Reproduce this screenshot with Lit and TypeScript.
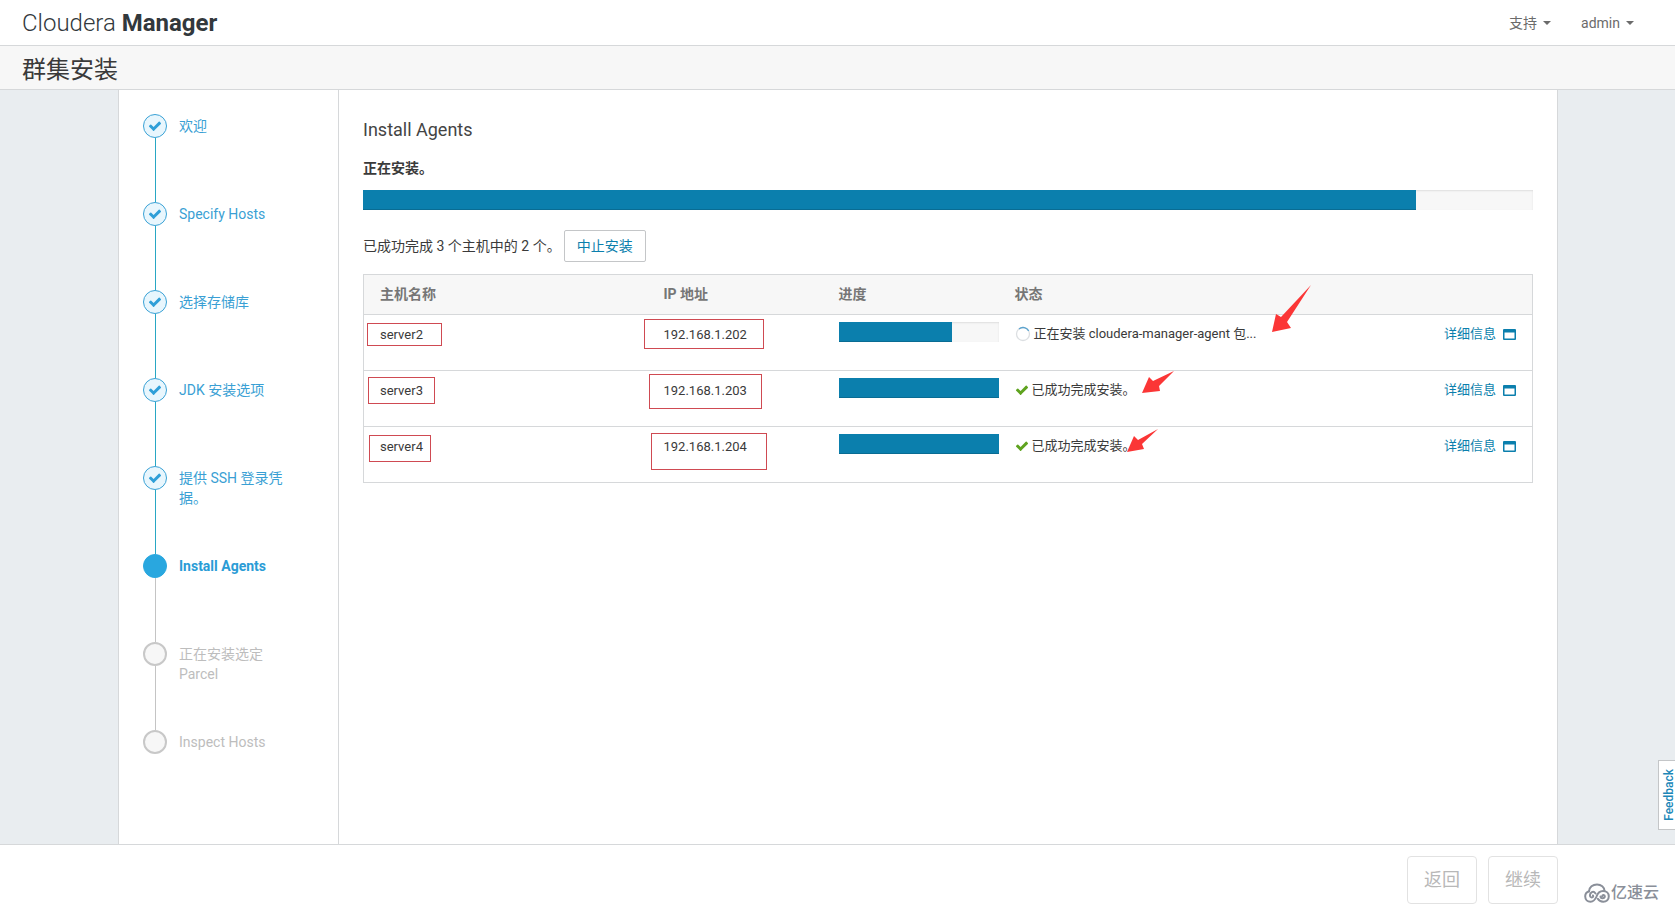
import { LitElement, html, svg, css, nothing } from "lit";
import { customElement } from "lit/decorators.js";

type StepState = "done" | "current" | "todo";

interface Step {
  label: string;
  state: StepState;
}

interface Host {
  name: string;
  ip: string;
  percent: number;
  status: string;
  done: boolean;
}

const STEPS: Step[] = [
  { label: "欢迎", state: "done" },
  { label: "Specify Hosts", state: "done" },
  { label: "选择存储库", state: "done" },
  { label: "JDK 安装选项", state: "done" },
  { label: "提供 SSH 登录凭据。", state: "done" },
  { label: "Install Agents", state: "current" },
  { label: "正在安装选定 Parcel", state: "todo" },
  { label: "Inspect Hosts", state: "todo" },
];

const HOSTS: Host[] = [
  { name: "server2", ip: "192.168.1.202", percent: 71, status: "正在安装 cloudera-manager-agent 包...", done: false },
  { name: "server3", ip: "192.168.1.203", percent: 100, status: "已成功完成安装。", done: true },
  { name: "server4", ip: "192.168.1.204", percent: 100, status: "已成功完成安装。", done: true },
];

/* Hand-drawn marks over the table, measured from its top left corner: x, y, width, height. */
const MARK_BOXES = [
  [4, 49, 74, 22],
  [5, 103, 66, 26],
  [6, 161, 61, 26],
  [281, 45, 119, 29],
  [286, 100, 112, 34],
  [288, 159, 115, 36],
];

const MARK_ARROWS = [
  "M909 58 L913 40 L918 43 L948 11 L924 48 L928 54 Z",
  "M779 119 L786 103 L790 107 L811 97 L796 112 L797 117 Z",
  "M764 178 L771 162 L775 166 L795 155 L779 170 L781 175 Z",
];

const checkPath =
  "M1671 566q0 40-28 68l-724 724-136 136q-28 28-68 28t-68-28l-136-136-362-362q-28-28-28-68t28-68l136-136q28-28 68-28t68 28l294 295 656-657q28-28 68-28t68 28l136 136q28 28 28 68z";

@customElement("app-root")
export class AppRoot extends LitElement {
  static styles = css`
    :host {
      display: flex;
      flex-direction: column;
      position: relative;
      min-height: 100vh;
      background: #fff;
      color: #3a3a3a;
      font: 13px/20px Roboto, "Noto Sans CJK SC", sans-serif;
    }
    *, *::before, *::after { box-sizing: border-box; }
    h1, h2, p, ol { margin: 0; padding: 0; font-weight: 400; }
    a { text-decoration: none; }
    button { font-family: inherit; background: #fff; cursor: pointer; }

    .topbar {
      display: flex;
      align-items: center;
      justify-content: space-between;
      height: 46px;
      padding: 0 41px 0 22px;
      border-bottom: 1px solid #d6d8da;
    }
    .brand { color: #32383c; font-size: 24px; line-height: 28px; font-weight: 300; }
    .brand strong { font-weight: 700; }
    .menus { display: flex; gap: 30px; }
    .menu {
      display: flex;
      align-items: center;
      gap: 6px;
      padding: 0;
      border: 0;
      color: #6b6b6b;
      font-size: 14px;
      line-height: 20px;
    }
    .caret {
      border: 4px solid transparent;
      border-top-color: #6b6b6b;
      border-bottom: 0;
    }
    .titlebar {
      height: 44px;
      padding: 8px 22px 0;
      background: #f7f7f7;
      border-bottom: 1px solid #d6d8da;
    }
    .titlebar h1 { font-size: 24px; line-height: 32px; }

    .backdrop { flex: 1; display: flex; padding: 0 117px 0 118px; background: #e9edf0; }
    .sheet {
      flex: 1;
      display: flex;
      background: #fff;
      border: solid #d6d8da;
      border-width: 0 1px;
    }
    .sidebar { flex: none; width: 220px; padding: 24px; border-right: 1px solid #d6d8da; }
    .steps { list-style: none; }
    .step { display: flex; gap: 12px; height: 88px; }
    .rail { flex: none; display: flex; flex-direction: column; align-items: center; width: 24px; }
    .dot {
      flex: none;
      display: grid;
      place-items: center;
      width: 24px;
      height: 24px;
      border-radius: 50%;
      border: 1px solid #3aa2d6;
      background: #e8f6fd;
    }
    .dot svg { width: 14px; height: 14px; fill: #2f9fd8; display: block; }
    .line { flex: 1; width: 1px; background: #29a7c4; }
    .label { max-width: 116px; padding-top: 2px; font-size: 14px; color: #3a9fd4; }
    .current .dot { background: #29a7df; border-color: #29a7df; }
    .current .label { font-weight: 700; color: #2a9cd6; }
    .current .line, .todo .line { background: #c4c4c4; }
    .todo .dot { background: #f7f7f7; border: 2px solid #c8c8c8; }
    .todo .label { color: #bdbdbd; }

    .main { flex: 1; min-width: 0; padding: 28px 24px 24px; }
    .main h2 { font-size: 18px; line-height: 24px; color: #444; }
    .state { margin-top: 16px; font-size: 14px; font-weight: 700; }
    .progress {
      height: 20px;
      background: #f7f7f7;
      box-shadow: inset 0 1px 2px rgba(0, 0, 0, 0.1);
    }
    .fill { height: 100%; background: #0b7fad; box-shadow: inset 0 -1px 0 rgba(0, 0, 0, 0.15); }
    .overall { margin-top: 12px; }
    .summary { display: flex; align-items: center; gap: 3px; margin: 20px 0 12px; font-size: 14px; }
    .abort {
      height: 32px;
      padding: 0 12px;
      border: 1px solid #c4c6c8;
      border-radius: 2px;
      color: #0b7fad;
      font-size: 14px;
      line-height: 20px;
    }

    .hosts { position: relative; }
    table { width: 100%; table-layout: fixed; border-collapse: collapse; border: 1px solid #d6d8da; }
    .c-name { width: 284px; }
    .c-ip { width: 175px; }
    .c-progress { width: 176px; }
    .c-details { width: 122px; }
    th {
      height: 40px;
      padding: 0 16px 2px;
      background: #f7f7f7;
      color: #767676;
      font-size: 14px;
      font-weight: 700;
      text-align: left;
    }
    td { height: 56px; padding: 7px 16px 0; vertical-align: top; border-top: 1px solid #d6d8da; }
    td .progress { margin-right: -16px; }
    .text { padding-top: 3px; }
    .status { display: flex; align-items: center; gap: 3px; padding-top: 2px; white-space: nowrap; }
    .status svg { flex: none; width: 14px; height: 14px; }
    .status .spinner { width: 16px; height: 16px; }
    .ok { fill: #5fa31f; }
    .details { display: flex; justify-content: flex-end; align-items: center; gap: 7px; padding-top: 2px; color: #0b7fad; }
    .details svg { width: 13px; height: 11px; }
    .marks {
      position: absolute;
      inset: 0;
      width: 100%;
      height: 100%;
      overflow: visible;
      pointer-events: none;
    }
    .marks rect { fill: none; stroke: #cf4a52; stroke-width: 1; }
    .marks path { fill: #fb3636; }

    .footer {
      display: flex;
      justify-content: flex-end;
      gap: 11px;
      height: 61px;
      padding: 11px 117px 0 0;
      border-top: 1px solid #d6d8da;
    }
    .nav {
      width: 70px;
      height: 48px;
      padding: 0;
      border: 1px solid #e2e2e2;
      border-radius: 4px;
      color: #b8b8b8;
      font-size: 18px;
      line-height: 24px;
      cursor: default;
    }
    .feedback {
      position: absolute;
      right: 0;
      bottom: 75px;
      width: 17px;
      height: 70px;
      padding: 0 0 0 4px;
      border: 1px solid #c4c6c8;
      border-right: 0;
      color: #1c87b8;
      font-size: 12px;
      line-height: 12px;
      font-weight: 500;
    }
    .feedback span { display: block; writing-mode: vertical-rl; transform: rotate(180deg); margin: 0 auto; }
    .watermark {
      position: absolute;
      right: 16px;
      bottom: 2px;
      display: flex;
      align-items: center;
      gap: 1px;
      color: #8a8f99;
      font-size: 16px;
      line-height: 20px;
      font-weight: 500;
    }
    .watermark svg { width: 26px; height: 20px; fill: none; stroke: #8a8f99; stroke-width: 2; stroke-linecap: round; }
  `;

  private renderStep(step: Step, index: number) {
    return html`
      <li class="step ${step.state}">
        <div class="rail">
          <span class="dot">
            ${step.state === "done" ? html`<svg viewBox="0 0 1792 1792" aria-hidden="true"><path d=${checkPath} /></svg>` : nothing}
          </span>
          ${index < STEPS.length - 1 ? html`<span class="line"></span>` : nothing}
        </div>
        <span class="label">${step.label}</span>
      </li>
    `;
  }

  private renderProgress(percent: number, label: string, extra = "") {
    return html`
      <div class="progress ${extra}" role="progressbar" aria-label=${label} aria-valuenow=${percent}>
        <div class="fill" style="width: ${percent}%"></div>
      </div>
    `;
  }

  private renderStatusIcon(done: boolean) {
    return done
      ? html`<svg class="ok" viewBox="0 0 1792 1792" aria-hidden="true"><path d=${checkPath} /></svg>`
      : html`<svg class="spinner" viewBox="0 0 16 16" fill="none" aria-hidden="true">
          <circle cx="8" cy="8" r="6.5" stroke="#dcdfe2" stroke-width="1.3" />
          <path d="M4 2.900A6.500 6.500 0 0 1 13.700 4.900" stroke="#5aa3cf" stroke-width="1.300" />
        </svg>`;
  }

  private renderHost(host: Host) {
    return html`
      <tr>
        <td><div class="text">${host.name}</div></td>
        <td><div class="text">${host.ip}</div></td>
        <td>${this.renderProgress(host.percent, host.name)}</td>
        <td><div class="status">${this.renderStatusIcon(host.done)}<span>${host.status}</span></div></td>
        <td>
          <a class="details" href="#">
            <span>详细信息</span>
            <svg viewBox="0 0 13 11" aria-hidden="true">
              <path fill="#0b7fad" fill-rule="evenodd" d="M1 0h11a1 1 0 0 1 1 1v9a1 1 0 0 1-1 1H1a1 1 0 0 1-1-1V1a1 1 0 0 1 1-1zM1.500 3.500v6h10v-6z" />
            </svg>
          </a>
        </td>
      </tr>
    `;
  }

  render() {
    return html`
      <header class="topbar">
        <div class="brand">Cloudera <strong>Manager</strong></div>
        <nav class="menus">
          <button class="menu" type="button">支持<span class="caret"></span></button>
          <button class="menu" type="button">admin<span class="caret"></span></button>
        </nav>
      </header>
      <div class="titlebar"><h1>群集安装</h1></div>

      <div class="backdrop">
        <div class="sheet">
          <aside class="sidebar">
            <ol class="steps">${STEPS.map((s, i) => this.renderStep(s, i))}</ol>
          </aside>
          <main class="main">
            <h2>Install Agents</h2>
            <p class="state">正在安装。</p>
            ${this.renderProgress(90, "正在安装", "overall")}
            <div class="summary">
              <span>已成功完成 3 个主机中的 2 个。</span>
              <button class="abort" type="button">中止安装</button>
            </div>
            <div class="hosts">
              <table>
                <colgroup>
                  <col class="c-name" />
                  <col class="c-ip" />
                  <col class="c-progress" />
                  <col />
                  <col class="c-details" />
                </colgroup>
                <thead>
                  <tr>
                    <th scope="col">主机名称</th>
                    <th scope="col">IP 地址</th>
                    <th scope="col">进度</th>
                    <th scope="col" colspan="2">状态</th>
                  </tr>
                </thead>
                <tbody>${HOSTS.map((h) => this.renderHost(h))}</tbody>
              </table>
              <svg class="marks" aria-hidden="true">
                ${MARK_BOXES.map(([x, y, w, h]) => svg`<rect x=${x + 0.5} y=${y + 0.5} width=${w} height=${h} />`)}
                ${MARK_ARROWS.map((d) => svg`<path d=${d} />`)}
              </svg>
            </div>
          </main>
        </div>
      </div>

      <footer class="footer">
        <button class="nav" type="button" disabled>返回</button>
        <button class="nav" type="button" disabled>继续</button>
      </footer>

      <button class="feedback" type="button"><span>Feedback</span></button>
      <div class="watermark">
        <svg viewBox="0 0 26 20" aria-hidden="true">
          <path d="M5 8.500C5 4 9 1.500 13 1.500S20.500 4 20.500 8" />
          <path d="M5 8.200C2.500 9 1.200 11 1.200 13.200C1.200 16.500 3.500 18.700 6.500 18.700C10 18.700 11.500 16 12.500 13.500C13.500 10.500 15.500 8 19 8C22.500 8 24.800 10.300 24.800 13.300C24.800 16.500 22.500 18.700 19.200 18.700C16.500 18.700 14.800 17.500 13.800 15.800" />
          <path d="M11.500 10.500C10.500 9 9 8.500 7.800 9.200C5.500 10 5.200 14.500 7.800 14.500C9 14.500 9.500 13.500 9 12.500M16.500 13.500C16.500 15.500 20.500 16 20.800 13.300C20.800 11.500 18.500 11.500 18.300 13" />
        </svg>
        <span>亿速云</span>
      </div>
    `;
  }
}
